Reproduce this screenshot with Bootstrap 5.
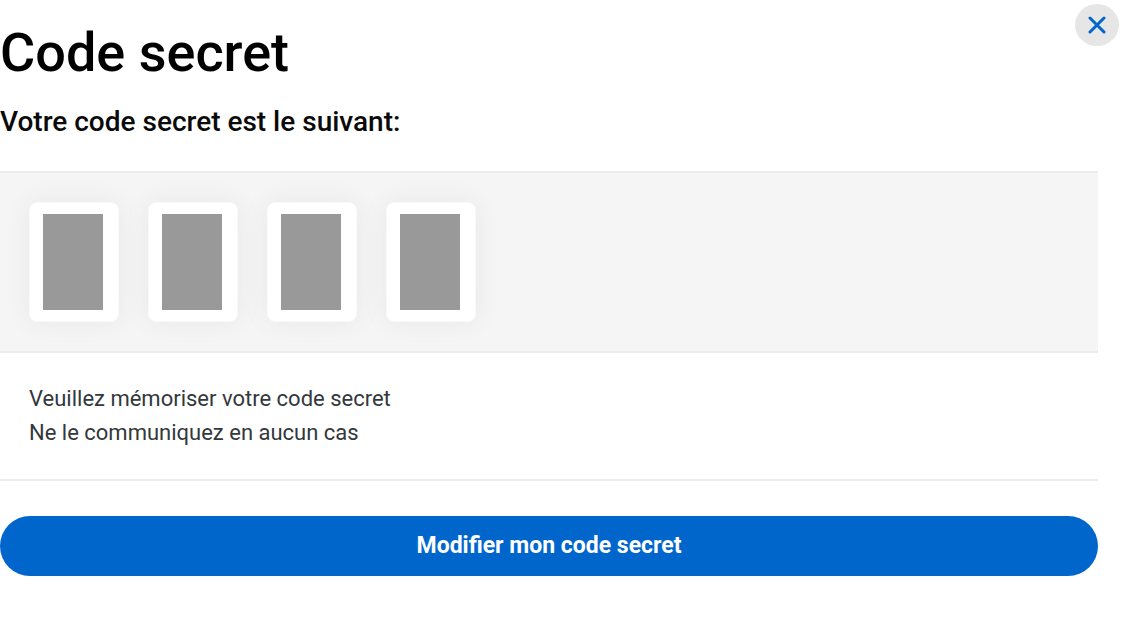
<!DOCTYPE html>
<html lang="fr">
<head>
<meta charset="utf-8">
<meta name="viewport" content="width=device-width, initial-scale=1">
<title>Code secret</title>
<link href="https://cdn.jsdelivr.net/npm/bootstrap@5.3.0/dist/css/bootstrap.min.css" rel="stylesheet">
<style>
body { font-family: Roboto, "Liberation Sans", sans-serif; color: #000; background: #fff; }
.dialog-main { padding-right: 32px; }
.dialog-title { font-size: 54px; line-height: 64px; font-weight: 500; padding-top: 21px; }
.dialog-subtitle { font-size: 28px; line-height: 32px; font-weight: 500; margin-top: 21px; color: #0a0a0a; }
.close-btn { top: 4px; right: 11px; width: 44px; height: 42px; background: #e6e6e6; color: #0066cc; }
.close-btn:hover, .close-btn:focus { background: #dadada; color: #0066cc; }
.code-band { background: #f5f5f5; border: solid #ececec; border-width: 2px 0; padding: 29px; gap: 29px; margin-top: 33px; }
.code-tile { width: 90px; height: 120px; padding: 11px 15px 11px 13px; background: #fff; border: 1px solid #fafafa; border-radius: 8px; box-shadow: 0 0 29px rgba(0,0,0,.06); }
.code-mask { background: #999; height: 96px; }
.advice { font-size: 22px; line-height: 34px; color: #33383c; padding: 29px; border-bottom: 2px solid #ececec; }
.modify-btn { background: #0066cc; color: #fff; font-size: 23px; line-height: 28px; font-weight: 700; padding: 16px; margin-top: 35px; }
.modify-btn:hover, .modify-btn:focus { background: #0057ad; color: #fff; }
</style>
</head>
<body>
<main class="dialog-main position-relative">
<h1 class="dialog-title mb-0">Code secret</h1>
<button type="button" class="close-btn btn rounded-circle border-0 p-0 position-absolute d-flex align-items-center justify-content-center" aria-label="Fermer">
<svg width="18" height="18" viewBox="0 0 18 18" fill="none" stroke="currentColor" stroke-width="3" stroke-linecap="round" aria-hidden="true"><path d="M2 2l14 14M16 2L2 16"/></svg>
</button>
<h2 class="dialog-subtitle mb-0">Votre code secret est le suivant:</h2>
<section class="code-band d-flex flex-wrap">
<div class="code-tile"><div class="code-mask"></div></div>
<div class="code-tile"><div class="code-mask"></div></div>
<div class="code-tile"><div class="code-mask"></div></div>
<div class="code-tile"><div class="code-mask"></div></div>
</section>
<p class="advice mb-0">Veuillez mémoriser votre code secret<br>Ne le communiquez en aucun cas</p>
<button type="button" class="modify-btn btn w-100 border-0 rounded-pill">Modifier mon code secret</button>
</main>
<script src="https://cdn.jsdelivr.net/npm/bootstrap@5.3.0/dist/js/bootstrap.bundle.min.js"></script>
</body>
</html>
